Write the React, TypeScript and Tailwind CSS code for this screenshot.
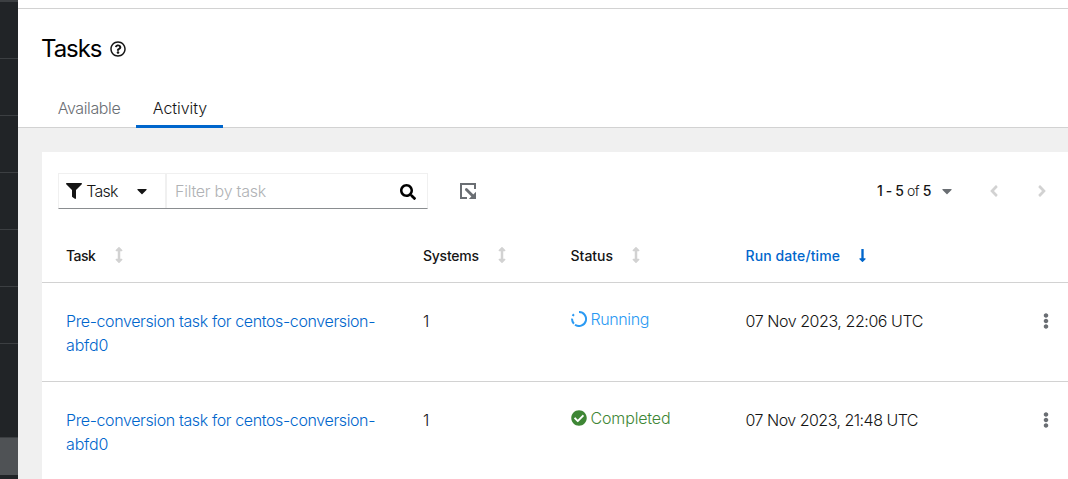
import React from "react";
import {
  FaFilter,
  FaCaretDown,
  FaSearch,
  FaLongArrowAltDown,
  FaArrowsAltV,
  FaAngleLeft,
  FaAngleRight,
  FaEllipsisV,
  FaCheckCircle,
  FaRegQuestionCircle,
} from "react-icons/fa";

const COLUMNS = "grid grid-cols-[357px_147.5px_175px_292.5px_32px] pl-6";

function ExportIcon() {
  return (
    <svg width="16" height="16" viewBox="0 0 16 16" fill="none" stroke="#6a6e73">
      <path d="M7 15H1V1h14v5" strokeWidth="2" />
      <path d="M6.4 6.4l6 6" strokeWidth="2.8" strokeLinecap="round" />
      <path d="M16 8.8V16H8.8z" fill="#6a6e73" stroke="none" />
    </svg>
  );
}

function InProgressIcon() {
  return (
    <svg width="16" height="16" viewBox="0 0 16 16" fill="none" stroke="#2b9af3" strokeWidth="2">
      <path d="M8 1a7 7 0 1 1-4 12.7" />
      <path d="M2.9 12.7A7 7 0 0 1 1.05 7.6" />
      <path d="M1.7 5A7 7 0 0 1 2.9 3.2" />
    </svg>
  );
}

function Sidebar() {
  return (
    <aside className="flex w-[18px] shrink-0 flex-col bg-[#212427]">
      <div className="h-0.5 bg-[#3c3f42]" />
      {[0, 1, 2, 3, 4, 5].map((i) => (
        <div key={i} className="h-[57px] shrink-0 border-b border-[#3c3f42]" />
      ))}
      <div className="h-[93px] shrink-0" />
      <div className="h-[38px] shrink-0 border-t border-[#3c3f42] bg-[#4f5255]" />
    </aside>
  );
}

function Header() {
  return (
    <header className="h-[128px] border-b border-[#d2d2d2] bg-white">
      <div className="h-[9px] border-b border-[#d2d2d2]" />
      <div className="flex h-[80px] items-center gap-2 pl-6">
        <h1 className="-ml-px w-[61px] whitespace-nowrap text-[24px] font-normal tracking-[-1.05px] text-black">
          Tasks
        </h1>
        <FaRegQuestionCircle className="size-4 text-[#151515]" />
      </div>
      <nav className="flex h-[39px] pl-6">
        <button className="w-[94px] whitespace-nowrap pb-0.5 text-[#6a6e73]">
          <span className="tracking-[-0.38px]">Available</span>
        </button>
        <button className="w-[87px] whitespace-nowrap border-b-[3px] border-[#06c] pl-px pt-px">
          <span className="tracking-[-0.05px]">Activity</span>
        </button>
      </nav>
    </header>
  );
}

function Toolbar() {
  return (
    <div className="flex h-[78px] items-center pl-4">
      <div className="flex h-9 w-[370px] border border-[#f0f0f0] border-b-[#8a8d90]">
        <button className="flex w-[108px] items-center border-r-2 border-[#f0f0f0] pl-[7px]">
          <FaFilter className="size-4" />
          <span className="ml-[3px] w-[34px] whitespace-nowrap tracking-[-0.7px]">Task</span>
          <FaCaretDown className="ml-[15px] size-4" />
        </button>
        <div className="flex flex-1 items-center justify-between pl-2 pr-[11px]">
          <span className="whitespace-nowrap tracking-[-0.25px] text-[#b0b2b5]">Filter by task</span>
          <FaSearch className="mt-0.5 size-4 text-black" />
        </div>
      </div>
      <button className="ml-8">
        <ExportIcon />
      </button>
      <div className="ml-auto flex items-center pr-[17px] text-sm">
        <span className="w-[54px] whitespace-nowrap tracking-[-0.4px]">
          <b className="font-medium">1 - 5</b> of <b className="font-medium">5</b>
        </span>
        <FaCaretDown className="ml-2 size-4 text-[#6a6e73]" />
        <FaAngleLeft className="ml-[30px] size-[18px] text-[#d2d2d2]" />
        <FaAngleRight className="ml-[30px] size-[18px] text-[#d2d2d2]" />
      </div>
    </div>
  );
}

function HeaderRow() {
  return (
    <div className={`${COLUMNS} h-[53px] items-center border-b border-[#d2d2d2] text-sm font-medium`}>
      <div className="flex items-center">
        <span className="w-[30px] whitespace-nowrap tracking-[-0.5px]">Task</span>
        <FaArrowsAltV className="-mt-0.5 ml-[15px] size-4 text-[#d2d2d2]" />
      </div>
      <div className="flex items-center">
        <span className="w-[56px] whitespace-nowrap tracking-[-0.25px]">Systems</span>
        <FaArrowsAltV className="-mt-0.5 ml-[15px] size-4 text-[#d2d2d2]" />
      </div>
      <div className="flex items-center">
        <span className="w-[43px] whitespace-nowrap">Status</span>
        <FaArrowsAltV className="-mt-0.5 ml-[14.5px] size-4 text-[#d2d2d2]" />
      </div>
      <div className="flex items-center text-[#06c]">
        <span className="w-[95px] whitespace-nowrap tracking-[0.1px]">Run date/time</span>
        <FaLongArrowAltDown className="-mt-0.5 ml-[14.5px] size-[15px]" />
      </div>
    </div>
  );
}

function TaskRow({ status, date }: { status: "Running" | "Completed"; date: string }) {
  return (
    <div className={`${COLUMNS} h-[99px] shrink-0 border-b border-[#d2d2d2] pt-[26px] leading-6`}>
      <a className="whitespace-nowrap tracking-[-0.38px] text-[#06c]">
        Pre-conversion task for centos-conversion-
        <br />
        <span className="tracking-[-0.15px]">abfd0</span>
      </a>
      <div>1</div>
      <div className="-mt-0.5 flex h-6 items-center gap-1">
        {status === "Running" ? <InProgressIcon /> : <FaCheckCircle className="size-4 text-[#3e8635]" />}
        <span
          className={
            status === "Running" ? "tracking-[-0.4px] text-[#2b9af3]" : "tracking-[-0.15px] text-[#3e8635]"
          }
        >
          {status}
        </span>
      </div>
      <div className={`whitespace-nowrap ${status === "Running" ? "tracking-[-0.43px]" : "tracking-[-0.51px]"}`}>
        {date}
      </div>
      <FaEllipsisV className="mt-1 size-4 text-[#6a6e73]" />
    </div>
  );
}

export default function App() {
  return (
    <div className="flex h-[479px] w-[1068px] overflow-hidden bg-[#f0f0f0] font-['Inter',sans-serif] text-base font-light text-[#151515]">
      <Sidebar />
      <div className="flex min-w-0 flex-1 flex-col">
        <Header />
        <main className="flex-1 overflow-hidden pl-6 pt-6">
          <section className="h-full bg-white">
            <Toolbar />
            <HeaderRow />
            <TaskRow status="Running" date="07 Nov 2023, 22:06 UTC" />
            <TaskRow status="Completed" date="07 Nov 2023, 21:48 UTC" />
          </section>
        </main>
      </div>
    </div>
  );
}
